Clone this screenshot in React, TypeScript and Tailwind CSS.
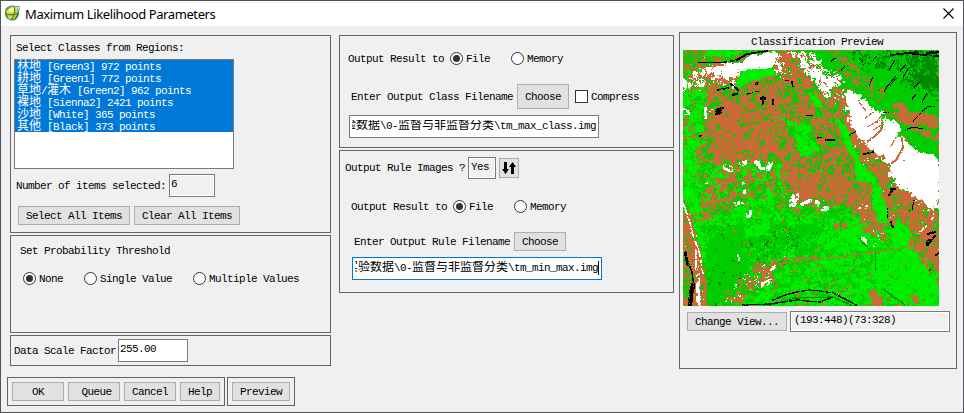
import React, { useMemo } from "react";

type Pt = [number, number];
type Mix = [number, number, number, number, number, number];

/* Class colours: sienna, green3, green2, dark green, white, black */
const COLORS = ["#cd6839", "#00cd00", "#00ee00", "#008b00", "#ffffff", "#000000"];
const SIZE = 256;

/* Land-cover zones, painted in order; each has a class mix and an edge roughness */
const ZONES: { p: Pt[]; m: Mix; r?: number }[] = [
  { p: [[0, 0], [256, 0], [256, 256], [0, 256]], m: [45, 32, 20, 0, 1, 0.1] },
  { p: [[18, 45], [50, 30], [100, 20], [104, 0], [140, 30], [152, 70], [185, 130], [200, 150], [170, 160], [110, 150], [60, 140], [20, 140], [12, 100]], m: [60, 32, 4, 0, 0.8, 0.4] },
  { p: [[45, 50], [95, 45], [98, 90], [110, 110], [70, 112], [30, 105], [18, 80]], m: [80, 18, 2, 0, 0.1, 0.1] },
  { p: [[108, 108], [165, 112], [172, 145], [112, 142]], m: [82, 16, 2, 0, 0, 0.1] },
  { p: [[0, 114], [100, 112], [108, 150], [145, 155], [100, 168], [40, 175], [0, 175]], m: [44, 31, 23, 0, 2, 0] },
  { p: [[95, 62], [150, 60], [160, 90], [182, 130], [150, 125], [100, 108]], m: [52, 37, 8, 0, 0, 0.5] },
  { p: [[0, 30], [20, 34], [24, 60], [17, 90], [11, 120], [22, 150], [8, 165], [0, 165]], m: [12, 24, 62, 0, 1, 0] },
  { p: [[0, 0], [110, 0], [60, 12], [0, 20]], m: [42, 55, 6, 0, 1, 1], r: 2 },
  { p: [[22, 0], [62, 0], [48, 7], [22, 6]], m: [3, 14, 80, 0, 0, 0], r: 2 },
  { p: [[12, 22], [30, 17], [55, 28], [50, 35], [30, 32], [10, 38]], m: [44, 14, 4, 0, 38, 0.5] },
  { p: [[0, 31], [10, 26], [5, 36], [0, 46]], m: [4, 4, 4, 0, 80, 0] },
  { p: [[27, 16], [40, 13], [58, 10], [70, 3], [92, 2], [98, 8], [91, 16], [80, 18], [56, 20], [52, 28], [42, 26], [30, 23]], m: [3, 1, 0, 0, 94, 0], r: 4 },
  { p: [[92, 5], [105, 0], [106, 25], [94, 28]], m: [60, 14, 0, 0, 30, 0] },
  { p: [[57, 21], [70, 18], [89, 18], [92, 24], [80, 27], [66, 30], [56, 38], [52, 34]], m: [0, 4, 95, 0, 0, 0], r: 2 },
  { p: [[108, 0], [256, 0], [256, 110], [230, 96], [217, 82], [200, 66], [187, 57], [160, 40], [140, 22]], m: [2, 94, 1, 2, 0, 0.3], r: 5 },
  { p: [[145, 0], [158, 0], [174, 18], [196, 34], [204, 48], [192, 46], [175, 38], [157, 22]], m: [40, 58, 0, 3, 0, 0] },
  { p: [[165, 4], [180, 0], [256, 0], [256, 50], [240, 38], [222, 40], [218, 20], [190, 18], [175, 17]], m: [0, 56, 0, 40, 0, 1] },
  { p: [[225, 5], [256, 5], [256, 40], [236, 38]], m: [0, 22, 0, 76, 0, 2] },
  { p: [[208, 54], [222, 52], [228, 62], [240, 62], [256, 67], [256, 80], [236, 76], [222, 70]], m: [84, 16, 0, 0, 0, 0], r: 3 },
  { p: [[198, 58], [212, 60], [232, 75], [256, 84], [256, 92], [235, 82], [215, 71]], m: [74, 26, 0, 0, 0, 0], r: 3 },
  { p: [[108, 1], [130, 3], [143, 20], [160, 28], [152, 50], [144, 44], [138, 36], [120, 20]], m: [22, 14, 0, 0, 66, 0.5], r: 8 },
  { p: [[147, 38], [163, 38], [163, 60], [150, 56]], m: [58, 30, 0, 0, 12, 0.5] },
  { p: [[157, 55], [166, 60], [180, 92], [200, 108], [206, 130], [195, 134], [176, 105], [160, 75]], m: [68, 24, 2, 0, 5, 0.8] },
  { p: [[160, 40], [170, 42], [187, 55], [201, 65], [215, 76], [217, 88], [230, 96], [256, 110], [256, 160], [247, 162], [233, 147], [220, 137], [206, 128], [204, 111], [189, 100], [178, 90], [167, 72]], m: [1.5, 0.1, 0, 0, 97, 0], r: 7 },
  { p: [[125, 40], [134, 45], [139, 57], [134, 57], [127, 50]], m: [0, 6, 92, 0, 0, 0], r: 3 },
  { p: [[92, 65], [104, 68], [116, 74], [126, 74], [127, 86], [137, 101], [128, 106], [116, 106], [113, 88], [108, 78]], m: [6, 20, 74, 0, 0, 0], r: 5 },
  { p: [[154, 71], [163, 76], [171, 97], [177, 113], [193, 128], [189, 133], [173, 129], [170, 110], [160, 92]], m: [1, 7, 92, 0, 0, 0], r: 3 },
  { p: [[192, 126], [206, 126], [220, 140], [256, 162], [256, 220], [235, 225], [212, 190], [200, 160]], m: [72, 18, 6, 0, 2, 1.4] },
  { p: [[0, 176], [45, 162], [72, 144], [100, 158], [112, 162], [150, 158], [180, 152], [200, 170], [226, 195], [238, 220], [256, 225], [256, 256], [0, 256]], m: [9, 38, 52, 0.8, 0.3, 0] },
  { p: [[170, 150], [185, 150], [200, 175], [204, 192], [190, 188], [175, 172]], m: [62, 16, 16, 0, 5, 0] },
  { p: [[188, 133], [194, 132], [202, 150], [205, 172], [196, 172], [188, 152]], m: [4, 12, 84, 0, 0, 0], r: 4 },
  { p: [[30, 174], [60, 172], [140, 172], [137, 200], [85, 214], [80, 240], [24, 256], [20, 200]], m: [7, 68, 16, 7, 0.1, 0.3] },
  { p: [[24, 185], [55, 182], [65, 225], [50, 256], [24, 256]], m: [3, 84, 1, 7, 0, 1.2] },
  { p: [[60, 176], [88, 172], [84, 187], [60, 187]], m: [1, 10, 88, 0, 0, 0], r: 4 },
  { p: [[65, 188], [120, 182], [125, 204], [70, 212]], m: [4, 62, 18, 15, 0, 0.5] },
  { p: [[138, 172], [168, 168], [195, 190], [188, 200], [138, 203]], m: [3, 24, 72, 1, 0, 0] },
  { p: [[210, 176], [215, 167], [227, 183], [226, 196], [211, 194]], m: [2, 6, 92, 0, 0, 0], r: 3 },
  { p: [[192, 205], [230, 196], [242, 215], [256, 235], [256, 256], [204, 256]], m: [3.5, 16, 80, 0, 0, 0] },
  { p: [[184, 242], [191, 238], [197, 245], [200, 256], [190, 256]], m: [94, 3, 3, 0, 0, 0], r: 3 },
  { p: [[60, 228], [90, 208], [102, 211], [80, 238], [55, 250], [40, 256], [42, 248]], m: [48, 32, 10, 0, 11, 0] },
  { p: [[0, 150], [8, 165], [17, 200], [23, 230], [23, 256], [8, 256], [0, 195]], m: [80, 12, 3, 0, 6, 0], r: 3 },
  { p: [[0, 208], [10, 225], [8, 256], [0, 256]], m: [45, 45, 5, 2, 0, 1], r: 3 },
];

/* Linear features and small patches: colour index, width, points */
const LINES: [number, number, Pt[]][] = [
  [5, 1.6, [[42, 12], [54, 10], [64, 4], [84, 1]]], [5, 1, [[15, 12], [42, 12]]],
  [0, 1.5, [[0, 20], [20, 17], [40, 15]]], [0, 2, [[102, 2], [112, 22], [128, 38]]],
  [5, 1.5, [[35, 40], [45, 38]]], [5, 1.5, [[48, 34], [55, 40]]],
  [5, 2, [[50, 45], [55, 43]]], [5, 1, [[64, 44], [76, 41]]],
  [5, 1.6, [[80, 47], [80, 54]]], [5, 3, [[78, 48], [81, 48]]], [5, 1.5, [[90, 50], [90, 54]]],
  [5, 5, [[34, 62], [37, 60]]], [5, 1.5, [[38, 58], [40, 58]]], [5, 2, [[17, 86], [18, 86]]],
  [5, 2, [[73, 34], [75, 33]]], [5, 1, [[102, 30], [106, 31]]],
  [5, 1.5, [[109, 32], [110, 36]]], [5, 1, [[123, 65], [130, 66]]],
  [5, 1.6, [[143, 90], [151, 90]]], [5, 1, [[134, 88], [139, 87]]], [5, 1, [[166, 85], [174, 81]]],
  [5, 1.5, [[181, 104], [190, 102]]], [5, 1, [[222, 80], [230, 77], [240, 79]]],
  [5, 1, [[239, 61], [246, 56], [251, 56]]], [5, 1, [[230, 71], [238, 63]]],
  [5, 1, [[201, 41], [206, 34], [213, 26]]], [5, 1, [[217, 21], [224, 13]]],
  [5, 1, [[231, 37], [238, 31]]], [5, 1, [[239, 52], [244, 43]]], [5, 1, [[229, 49], [233, 44]]],
  [5, 1, [[206, 20], [212, 10]]], [5, 1, [[148, 11], [152, 8]]], [5, 1, [[200, 62], [206, 63]]],
  [5, 1, [[186, 35], [190, 27]]], [5, 1, [[220, 27], [225, 19]]], [5, 1, [[190, 10], [195, 5]]],
  [5, 1, [[207, 35], [215, 27]]], [5, 1, [[158, 20], [162, 16]]], [5, 1, [[176, 8], [180, 12]]],
  [5, 1.7, [[208, 5], [225, 3], [240, 5], [256, 6]]], [5, 1.5, [[214, 4], [234, 2]]], [5, 2.5, [[244, 3], [256, 2]]],
  [5, 3, [[244, 194], [247, 190]]], [5, 2, [[245, 184], [252, 182]]], [5, 1.5, [[248, 190], [252, 186]]],
  [5, 1.6, [[253, 205], [256, 203]]], [5, 1.6, [[206, 145], [210, 139]]], [5, 2, [[208, 139], [212, 139]]],
  [5, 1, [[231, 150], [229, 160]]], [5, 1, [[204, 158], [204, 167]]], [5, 1.6, [[208, 172], [210, 178]]],
  [4, 1.5, [[0, 153], [6, 170], [10, 185], [17, 205], [20, 224]]],
  [4, 4, [[15, 256], [15, 235], [15, 225]]], [4, 2, [[13, 200], [13, 220]]],
  [5, 2.5, [[2, 202], [5, 215]]], [5, 1.3, [[5, 212], [9, 222], [11, 236]]],
  [5, 4, [[10, 235], [8, 244], [7, 256]]],
  [4, 3, [[60, 133], [62, 143]]], [4, 3, [[52, 154], [60, 152]]],
  [4, 4, [[65, 166], [67, 162]]], [4, 6, [[109, 154], [113, 146]]],
  [4, 3, [[118, 155], [128, 150]]], [4, 3, [[133, 151], [136, 155]]], [4, 4, [[140, 159], [145, 158]]],
  [4, 4, [[180, 189], [182, 192]]], [4, 3, [[191, 194], [192, 196]]],
  [4, 4, [[80, 235], [87, 231]]], [4, 2, [[88, 220], [94, 215]]],
  [4, 2, [[55, 205], [56, 210]]], [4, 5, [[42, 116], [48, 120]]], [4, 4, [[58, 114], [62, 112]]],
  [4, 4, [[85, 119], [88, 112]]], [4, 4, [[73, 112], [80, 118]]],
  [4, 4, [[0, 60], [5, 63]]], [4, 3, [[22, 57], [23, 68]]], [4, 2, [[25, 62], [29, 60]]],
  [4, 4, [[249, 168], [249, 156]]], [4, 2, [[236, 183], [243, 176]]], [4, 3, [[176, 157], [184, 155]]],
  [0, 6, [[154, 176], [161, 176]]], [1, 1.5, [[158, 171], [158, 181]]],
  [0, 1, [[85, 216], [115, 211], [154, 207], [194, 202], [228, 196]]],
  [0, 1.6, [[100, 209], [133, 207]]], [3, 1, [[176, 188], [186, 199]]], [3, 1, [[200, 239], [222, 255]]],
  [3, 1, [[192, 203], [192, 220]]], [0, 4, [[230, 246], [234, 252]]],
  [0, 1, [[198, 66], [193, 74]]], [0, 1, [[190, 62], [182, 68]]], [0, 1, [[196, 70], [184, 77]]],
  [0, 1, [[176, 52], [182, 60]]], [0, 1, [[200, 74], [190, 80]]],
  [0, 1.6, [[199, 70], [198, 80], [192, 86], [181, 94]]], [0, 1.6, [[219, 88], [220, 98], [213, 110], [208, 114]]],
  [0, 1, [[213, 87], [207, 98]]], [1, 1, [[200, 72], [199, 79]]],
  [3, 1.3, [[85, 256], [110, 248], [150, 247], [170, 256]]],
  [5, 1.3, [[90, 250], [102, 245], [114, 242], [126, 240], [138, 241], [150, 243], [162, 249], [173, 255]]],
  [5, 1.3, [[60, 255], [87, 254], [100, 252], [115, 250], [125, 251], [137, 252], [150, 247]]],
];

function hash(x: number, y: number, s: number) {
  let h = Math.imul(x, 374761393) + Math.imul(y, 668265263) + Math.imul(s, 1442695041);
  h = Math.imul(h ^ (h >>> 13), 1274126177);
  h = Math.imul(h ^ (h >>> 16), 2246822519);
  return ((h ^ (h >>> 15)) >>> 0) / 4294967296;
}

function smooth(x: number, y: number, scale: number, s: number) {
  const u = x / scale, v = y / scale;
  const i = Math.floor(u), j = Math.floor(v);
  const a = u - i, b = v - j;
  const top = hash(i, j, s) * (1 - a) + hash(i + 1, j, s) * a;
  const bot = hash(i, j + 1, s) * (1 - a) + hash(i + 1, j + 1, s) * a;
  return top * (1 - b) + bot * b - 0.5;
}

function inside(p: Pt[], x: number, y: number) {
  let r = false;
  for (let i = 0, j = p.length - 1; i < p.length; j = i++) {
    if (p[i][1] > y !== p[j][1] > y && x < ((p[j][0] - p[i][0]) * (y - p[i][1])) / (p[j][1] - p[i][1]) + p[i][0]) r = !r;
  }
  return r;
}

function classify() {
  const grid = new Uint8Array(SIZE * SIZE);
  for (let y = 0; y < SIZE; y++) {
    for (let x = 0; x < SIZE; x++) {
      const wx = smooth(x, y, 5, 91) + smooth(x, y, 2, 92) * 0.9;
      const wy = smooth(x, y, 5, 93) + smooth(x, y, 2, 94) * 0.9;
      let mix = ZONES[0].m;
      for (const z of ZONES) {
        const r = z.r ?? 9;
        if (inside(z.p, x + wx * r, y + wy * r)) mix = z.m;
      }
      let best = -99;
      for (let c = 0; c < 6; c++) {
        if (!mix[c]) continue;
        const n = smooth(x, y, 1.9, c + 1) * 3.6 + smooth(x, y, 5, c + 11) * 2.6 + (hash(x, y, c + 21) - 0.5) * 1.8;
        const score = Math.log(mix[c]) + n;
        if (score > best) { best = score; grid[y * SIZE + x] = c; }
      }
    }
  }
  for (const [c, w, pts] of LINES) {
    for (let k = 0; k + 1 < pts.length; k++) {
      const [ax, ay] = pts[k], [bx, by] = pts[k + 1];
      const len = Math.max(1, Math.hypot(bx - ax, by - ay));
      for (let t = 0; t <= len * 2; t++) {
        const q = t / (len * 2);
        const cx = ax + (bx - ax) * q, cy = ay + (by - ay) * q;
        const h = w / 2;
        for (let y = Math.round(cy - h); y < Math.round(cy + h); y++) {
          for (let x = Math.round(cx - h); x < Math.round(cx + h); x++) {
            const keep = c === 4 ? smooth(x, y, 1.9, 88) > -0.1 : hash(x, y, 77) > 0.08;
            if (x >= 0 && y >= 0 && x < SIZE && y < SIZE && keep) grid[y * SIZE + x] = c;
          }
        }
      }
    }
  }
  const paths = COLORS.map(() => "");
  for (let y = 0; y < SIZE; y++) {
    let x = 0;
    while (x < SIZE) {
      const c = grid[y * SIZE + x];
      let e = x + 1;
      while (e < SIZE && grid[y * SIZE + e] === c) e++;
      paths[c] += `M${x} ${y}h${e - x}v1h-${e - x}z`;
      x = e;
    }
  }
  return paths;
}

function ClassMap() {
  const paths = useMemo(classify, []);
  return (
    <svg className="ml-[3px] block shrink-0" width="256" height="256" viewBox="0 0 256 256" shapeRendering="crispEdges">
      {paths.map((d, i) => <path key={i} d={d} fill={COLORS[i]} />)}
    </svg>
  );
}

/* Half-width characters sit on a 6px grid, ideographs on a 12px grid */
function T({ children, className = "" }: { children: string; className?: string }) {
  const parts = children.split(/([\u4e00-\u9fff]+)/);
  return (
    <span className={`shrink-0 whitespace-pre leading-3 ${className}`}>
      {parts.map((p, i) => (i % 2 ? <span key={i} className="text-[12px] leading-3 tracking-normal">{p}</span> : p))}
    </span>
  );
}

function Button({ children, className }: { children: React.ReactNode; className: string }) {
  return (
    <button className={`flex shrink-0 items-center justify-center border border-[#adadad] bg-[#e1e1e1] ${className}`}>
      {children}
    </button>
  );
}

function Radio({ on = false }: { on?: boolean }) {
  return (
    <span className="flex size-[13px] shrink-0 items-center justify-center rounded-full border border-[#333] bg-white">
      {on && <span className="size-[7px] rounded-full bg-[#333]" />}
    </span>
  );
}

const PANEL = "flex shrink-0 flex-col border border-[#646464]";
const FIELD = "flex shrink-0 overflow-hidden border border-[#7a7a7a]";

export default function App() {
  return (
    <div className="flex h-[413px] w-[964px] flex-col overflow-hidden border border-[#51525a] bg-[#f0f0f0] font-['Liberation_Mono','Noto_Sans_CJK_SC',monospace] text-[11px] leading-3 tracking-[-0.6px] text-black">
      <header className="flex h-[25px] shrink-0 items-center bg-white pl-[3px] pr-[9px]">
        <svg width="17" height="17" viewBox="0 0 17 17">
          <circle cx="8" cy="8.3" r="7" fill="#348744" />
          <path d="M2 7C4 2 10 0 13 3l1 5-4 6-5 1z" fill="#e9d832" />
          <path d="M4 6C6 3 8 2 11 3L8 7z" fill="#fffbb0" />
          <path d="M1 8.500c4 2 9 1.500 13-.5M10 2c2 4 0 10-3 13" fill="none" stroke="#368348" strokeWidth="1.100" />
          <path d="M1 5c2-4 8-5 12-3l2-1c1 2-.5 6-3 9M2 11c2 4 7 5 10 3" fill="none" stroke="#4d8cae" strokeWidth="1" />
        </svg>
        <h1 className="ml-1 font-['Noto_Sans',sans-serif] text-[13px] leading-4 tracking-[-0.4px]">Maximum Likelihood Parameters</h1>
        <svg className="ml-auto" width="11" height="11" viewBox="0 0 11 11"><path d="M.5.5l10 10M10.500.5l-10 10" stroke="#000" strokeWidth="1.100" /></svg>
      </header>

      <main className="flex h-[342px] shrink-0 items-start pl-[9px] pt-[6px]">
        <section className="mt-[3px] flex w-[321px] shrink-0 flex-col gap-[2px]">
          <div className={`${PANEL} h-[198px]`}>
            <T className="ml-[5px] mt-[6px]">Select Classes from Regions:</T>
            <div className="ml-[3px] mt-[5px] h-[110px] w-[220px] shrink-0 border border-[#7a7a7a] bg-white">
              <div className="flex flex-col bg-[#0078d7] text-white">
                {["林地 [Green3] 972 points", "耕地 [Green1] 772 points", "草地/灌木 [Green2] 962 points", "裸地 [Sienna2] 2421 points", "沙地 [White] 365 points", "其他 [Black] 373 points"].map((s) => (
                  <div key={s} className="flex h-3 items-start pl-[2px] pt-px"><T>{s}</T></div>
                ))}
              </div>
            </div>
            <div className="mt-[5px] flex h-[23px] shrink-0 items-center pl-[5px]">
              <T className="w-[153px]">Number of items selected:</T>
              <div className={`${FIELD} h-[23px] w-[46px] pl-px pt-[3px] shadow-[inset_0_0_0_1px_#fff]`}><T>6</T></div>
            </div>
            <div className="mt-[9px] flex gap-1 pl-[7px]">
              <Button className="h-[19px] w-[112px]"><T>Select All Items</T></Button>
              <Button className="h-[19px] w-[106px]"><T>Clear All Items</T></Button>
            </div>
          </div>
          <div className={`${PANEL} h-[98px]`}>
            <T className="ml-[9px] mt-[9px]">Set Probability Threshold</T>
            <div className="mt-[15px] flex h-[13px] items-center pl-3">
              <Radio on /><T className="ml-[3px] w-[45px]">None</T>
              <Radio /><T className="ml-[3px] w-[93px]">Single Value</T>
              <Radio /><T className="ml-[3px]">Multiple Values</T>
            </div>
          </div>
          <div className={`${PANEL} h-[31px]`}>
            <div className="mt-[3px] flex h-[23px] items-center pl-[3px]">
              <T className="w-[104px]">Data Scale Factor</T>
              <div className={`${FIELD} h-[23px] w-[70px] bg-white pl-px pt-[3px]`}><T>255.00</T></div>
            </div>
          </div>
        </section>

        <section className="ml-2 mt-[3px] flex w-[335px] shrink-0 flex-col gap-[2px]">
          <div className={`${PANEL} h-[113px]`}>
            <div className="mt-4 flex h-[13px] items-center pl-2">
              <T className="w-[102px]">Output Result to</T>
              <Radio on /><T className="ml-[3px] w-[45px]">File</T>
              <Radio /><T className="ml-[3px]">Memory</T>
            </div>
            <div className="mt-[19px] flex h-[25px] shrink-0 items-center pl-[11px]">
              <T className="w-[166px]">Enter Output Class Filename</T>
              <Button className="h-[25px] w-[52px]"><T>Choose</T></Button>
              <span className="ml-[6px] size-[13px] border border-[#333] bg-white" />
              <T className="ml-[3px]">Compress</T>
            </div>
            <div className={`${FIELD} ml-[9px] mt-[6px] h-[23px] w-[250px] bg-white px-[2px] pt-1`}>
              <div className="flex h-4 w-full justify-end overflow-hidden"><T>验数据\0-监督与非监督分类\tm_max_class.img</T></div>
            </div>
          </div>
          <div className={`${PANEL} h-[143px]`}>
            <div className="mt-[6px] flex h-[22px] shrink-0 items-center pl-[5px]">
              <T className="w-[123px]">Output Rule Images ?</T>
              <div className={`${FIELD} h-[22px] w-[28px] pl-[2px] pt-[3px] shadow-[inset_0_0_0_1px_#fff]`}><T>Yes</T></div>
              <Button className="ml-[3px] h-5 w-5">
                <svg width="14" height="12" viewBox="0 0 14 12"><path d="M2 0h3v7h2l-3.500 5L0 7h2zM9 12V5H7l3.500-5L14 5h-2v7z" /></svg>
              </Button>
            </div>
            <div className="mt-[21px] flex h-[13px] shrink-0 items-center pl-[11px]">
              <T className="w-[102px]">Output Result to</T>
              <Radio on /><T className="ml-[3px] w-[45px]">File</T>
              <Radio /><T className="ml-[3px]">Memory</T>
            </div>
            <div className="mt-[19px] flex h-[19px] shrink-0 items-center pl-[14px]">
              <T className="w-[160px]">Enter Output Rule Filename</T>
              <Button className="h-[19px] w-[52px]"><T>Choose</T></Button>
            </div>
            <div className="ml-3 mt-[6px] flex h-[23px] w-[250px] shrink-0 border border-[#0078d7] bg-white px-[2px] pt-[3px]">
              <div className="flex h-[14px] w-full justify-end overflow-hidden border-r border-black"><T className="pt-px">实验数据\0-监督与非监督分类\tm_min_max.img</T></div>
            </div>
          </div>
        </section>

        <section className={`${PANEL} ml-[5px] h-[337px] w-[278px]`}>
          <T className="ml-[71px] mt-[3px] mb-[2px]">Classification Preview</T>
          <ClassMap />
          <div className="mt-[5px] flex items-center pl-[7px]">
            <Button className="h-[19px] w-[100px]"><T>Change View...</T></Button>
            <div className={`${FIELD} ml-[3px] h-[21px] w-[160px] pl-[3px] pt-[2px] shadow-[inset_0_0_0_1px_#fff]`}><T>(193:448)(73:328)</T></div>
          </div>
        </section>
      </main>

      <footer className="ml-[6px] mt-[9px] flex gap-[2px]">
        <div className="flex h-[29px] w-[218px] gap-1 border border-[#646464] pl-1 pt-1">
          <Button className="h-[19px] w-[52px]"><T>OK</T></Button>
          <Button className="h-[19px] w-[52px] pl-[5px]"><T>Queue</T></Button>
          <Button className="h-[19px] w-[52px]"><T>Cancel</T></Button>
          <Button className="h-[19px] w-10"><T>Help</T></Button>
        </div>
        <div className="flex h-[29px] w-[68px] border border-[#646464] pl-1 pt-1">
          <Button className="h-[19px] w-[58px]"><T>Preview</T></Button>
        </div>
      </footer>
    </div>
  );
}
